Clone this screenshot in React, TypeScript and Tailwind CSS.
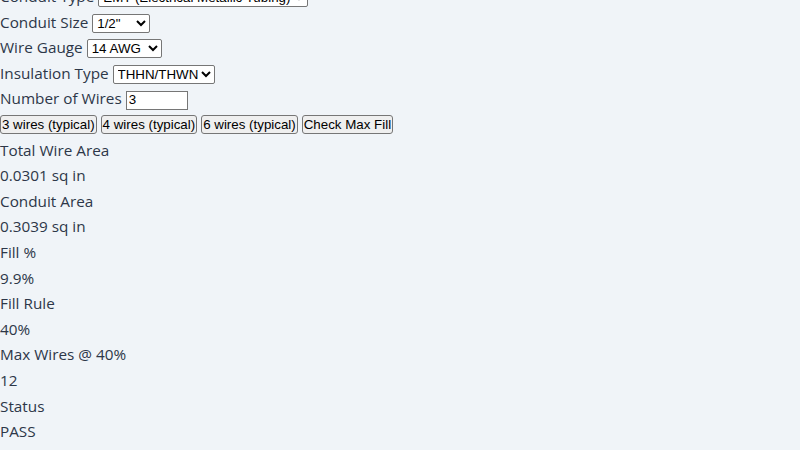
import React from "react";

const ctl =
  "bg-white text-black border border-[#767676] rounded-[2px] font-['Liberation_Sans',Arial,sans-serif] text-[13.333px] leading-normal h-[19px] py-0 align-baseline";

export default function App() {
  const results: [string, string][] = [
    ["Total Wire Area", "0.0301 sq in"],
    ["Conduit Area", "0.3039 sq in"],
    ["Fill %", "9.9%"],
    ["Fill Rule", "40%"],
    ["Max Wires @ 40%", "12"],
    ["Status", "PASS"],
  ];
  return (
    <div className="w-[800px] h-[450px] overflow-hidden bg-[#f0f4f8] text-[#2d3748] font-['Open_Sans','Noto_Sans',sans-serif] text-[15.3px] leading-[25.6px]">
      <div className="mt-[-16px] flex flex-col">
        <div>
          Conduit Type{" "}
          <select className={`${ctl} w-[210px]`} defaultValue="emt">
            <option value="emt">EMT (Electrical Metallic Tubing)</option>
            <option value="pvc">PVC Schedule 40</option>
            <option value="rmc">RMC (Rigid Metal Conduit)</option>
          </select>
        </div>
        <div>
          Conduit Size{" "}
          <select className={`${ctl} w-[58px]`} defaultValue="1/2">
            <option value="1/2">1/2"</option>
            <option value="3/4">3/4"</option>
            <option value="1">1"</option>
          </select>
        </div>
        <div>
          Wire Gauge{" "}
          <select className={`${ctl} w-[75px]`} defaultValue="14">
            <option value="14">14 AWG</option>
            <option value="12">12 AWG</option>
            <option value="10">10 AWG</option>
          </select>
        </div>
        <div>
          Insulation Type{" "}
          <select className={`${ctl} w-[102px]`} defaultValue="thhn">
            <option value="thhn">THHN/THWN</option>
            <option value="xhhw">XHHW</option>
          </select>
        </div>
        <div>
          Number of Wires{" "}
          <input
            type="number"
            defaultValue={3}
            className={`${ctl} w-[62px] px-[2px] rounded-none [appearance:textfield]`}
          />
        </div>
        <div className="flex items-center gap-[4px] h-[25.6px]">
          {["3 wires (typical)", "4 wires (typical)", "6 wires (typical)", "Check Max Fill"].map((b) => (
            <button
              key={b}
              className="bg-[#efefef] text-black border border-[#767676] rounded-[3px] px-px h-[19px] font-['Liberation_Sans',Arial,sans-serif] text-[13.333px] leading-none"
            >
              {b}
            </button>
          ))}
        </div>
        {results.map(([k, v]) => (
          <React.Fragment key={k}>
            <div>{k}</div>
            <div>{v}</div>
          </React.Fragment>
        ))}
      </div>
    </div>
  );
}
